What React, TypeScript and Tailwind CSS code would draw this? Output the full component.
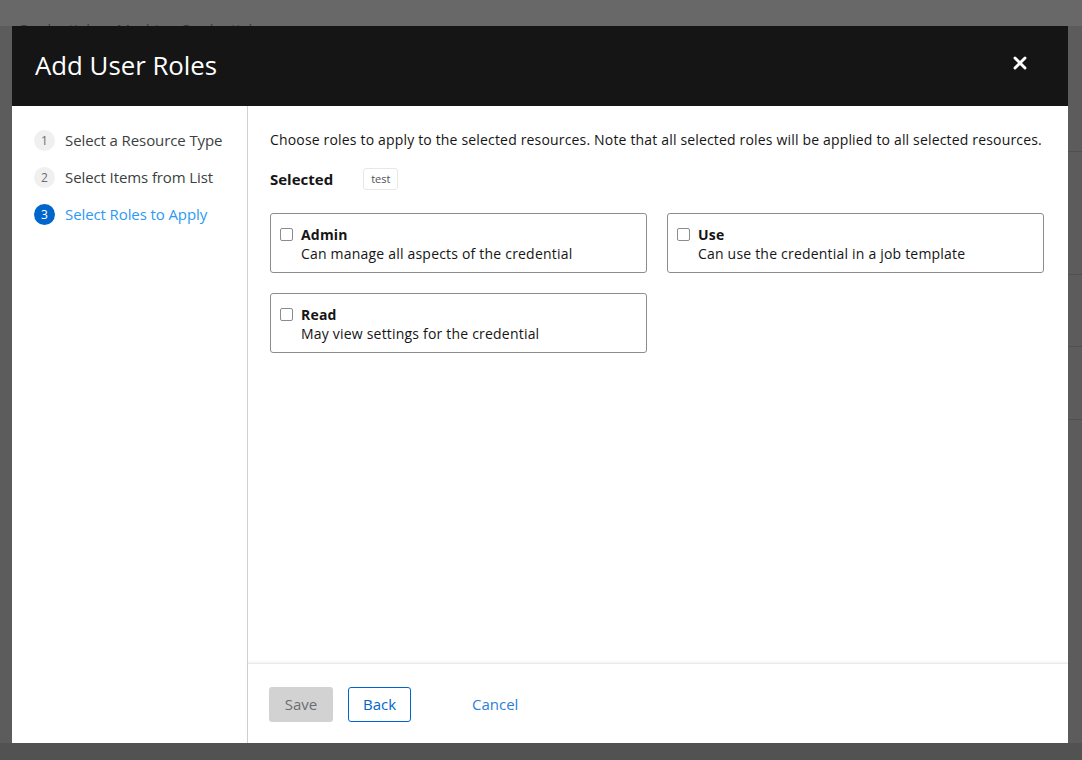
import { X } from "lucide-react";

const steps = [
  { n: 1, label: "Select a Resource Type" },
  { n: 2, label: "Select Items from List" },
  { n: 3, label: "Select Roles to Apply", active: true },
];

const roles = [
  { name: "Admin", desc: "Can manage all aspects of the credential" },
  { name: "Use", desc: "Can use the credential in a job template" },
  { name: "Read", desc: "May view settings for the credential" },
];

export default function App() {
  return (
    <div className="relative h-[760px] w-full overflow-hidden bg-[#5c5c5c] font-['Open_Sans',sans-serif]">
      {/* page behind the backdrop */}
      <div className="flex h-[26px] items-end bg-[#686868] px-[18px]">
        <span className="translate-y-[14px] text-[15px] text-[#33404f]">
          Credentials&nbsp;&nbsp;&nbsp;&nbsp;&nbsp;Machine Credential
        </span>
      </div>
      <div className="ml-[30px] flex h-[717px] flex-col">
        <div className="h-[126px] border-b border-[#505050]" />
        <div className="h-[123px] border-b border-[#505050]" />
        <div className="h-[72px] border-b border-[#505050]" />
        <div className="h-[73px] border-b border-[#505050]" />
      </div>
      <div className="h-[17px] bg-[#525252]" />

      {/* modal */}
      <div className="absolute left-[12px] top-[26px] flex h-[717px] w-[1056px] flex-col bg-white">
        <header className="flex h-[80px] shrink-0 items-center justify-between bg-[#151515] pl-[23px] pr-[38px]">
          <h1 className="text-[25.8px] leading-none text-white">Add User Roles</h1>
          <button type="button" className="-mt-[6px] text-white">
            <X className="h-[20px] w-[20px]" strokeWidth={3.5} />
          </button>
        </header>

        <div className="flex min-h-0 flex-1">
          <nav className="w-[236px] shrink-0 border-r border-[#d2d2d2] pl-[22px] pt-[24px]">
            <ol className="flex flex-col gap-[16px]">
              {steps.map((s) => (
                <li key={s.n} className="flex h-[21px] items-center gap-[10px]">
                  <span
                    className={`flex h-[21px] w-[21px] items-center justify-center rounded-full text-[12px] ${
                      s.active ? "bg-[#0066cc] text-white" : "bg-[#f0f0f0] text-[#6a6e73]"
                    }`}
                  >
                    {s.n}
                  </span>
                  <span className={`text-[15px] tracking-[-0.1px] ${s.active ? "text-[#2b9af3]" : "text-[#3c3f42]"}`}>
                    {s.label}
                  </span>
                </li>
              ))}
            </ol>
          </nav>

          <section className="flex min-w-0 flex-1 flex-col">
            <div className="flex-1 pl-[22px] pr-[20px] pt-[24px]">
              <p className="text-[14px] leading-[20px] tracking-[0.17px] text-[#151515]">
                Choose roles to apply to the selected resources. Note that all selected roles will be
                applied to all selected resources.
              </p>
              <div className="mt-[18px] flex items-center gap-[30px]">
                <span className="text-[15px] font-bold text-[#151515]">Selected</span>
                <span className="rounded-[3px] border border-[#e8e8e8] px-[7px] py-[3px] text-[11px] leading-[14px] text-[#4f5255]">
                  test
                </span>
              </div>
              <div className="mt-[22px] grid w-[774px] grid-cols-2 gap-x-[20px] gap-y-[20px]">
                {roles.map((r) => (
                  <label
                    key={r.name}
                    className="flex h-[60px] gap-[8px] rounded-[3px] border border-[#8a8d90] pl-[9px] pt-[11px]"
                  >
                    <span className="mt-[3px] h-[13px] w-[13px] shrink-0 rounded-[2px] border border-[#8a8d90]" />
                    <span className="flex flex-col tracking-[0.2px]">
                      <span className="text-[14px] font-bold leading-[19px] text-[#151515]">{r.name}</span>
                      <span className="text-[14px] leading-[20px] text-[#151515]">{r.desc}</span>
                    </span>
                  </label>
                ))}
              </div>
            </div>

            <footer className="flex h-[80px] shrink-0 items-start gap-[15px] border-t border-[#ebebeb] pl-[21px] pt-[23px] shadow-[0_-1px_2px_rgba(0,0,0,0.06)]">
              <button
                type="button"
                className="h-[35px] w-[64px] rounded-[3px] bg-[#d2d2d2] text-[15px] text-[#6a6e73]"
              >
                Save
              </button>
              <button
                type="button"
                className="h-[35px] w-[63px] rounded-[3px] border border-[#0066cc] text-[15px] text-[#0066cc]"
              >
                Back
              </button>
              <button type="button" className="h-[35px] px-[46px] text-[15px] text-[#2b7fd8]">
                Cancel
              </button>
            </footer>
          </section>
        </div>
      </div>
    </div>
  );
}
